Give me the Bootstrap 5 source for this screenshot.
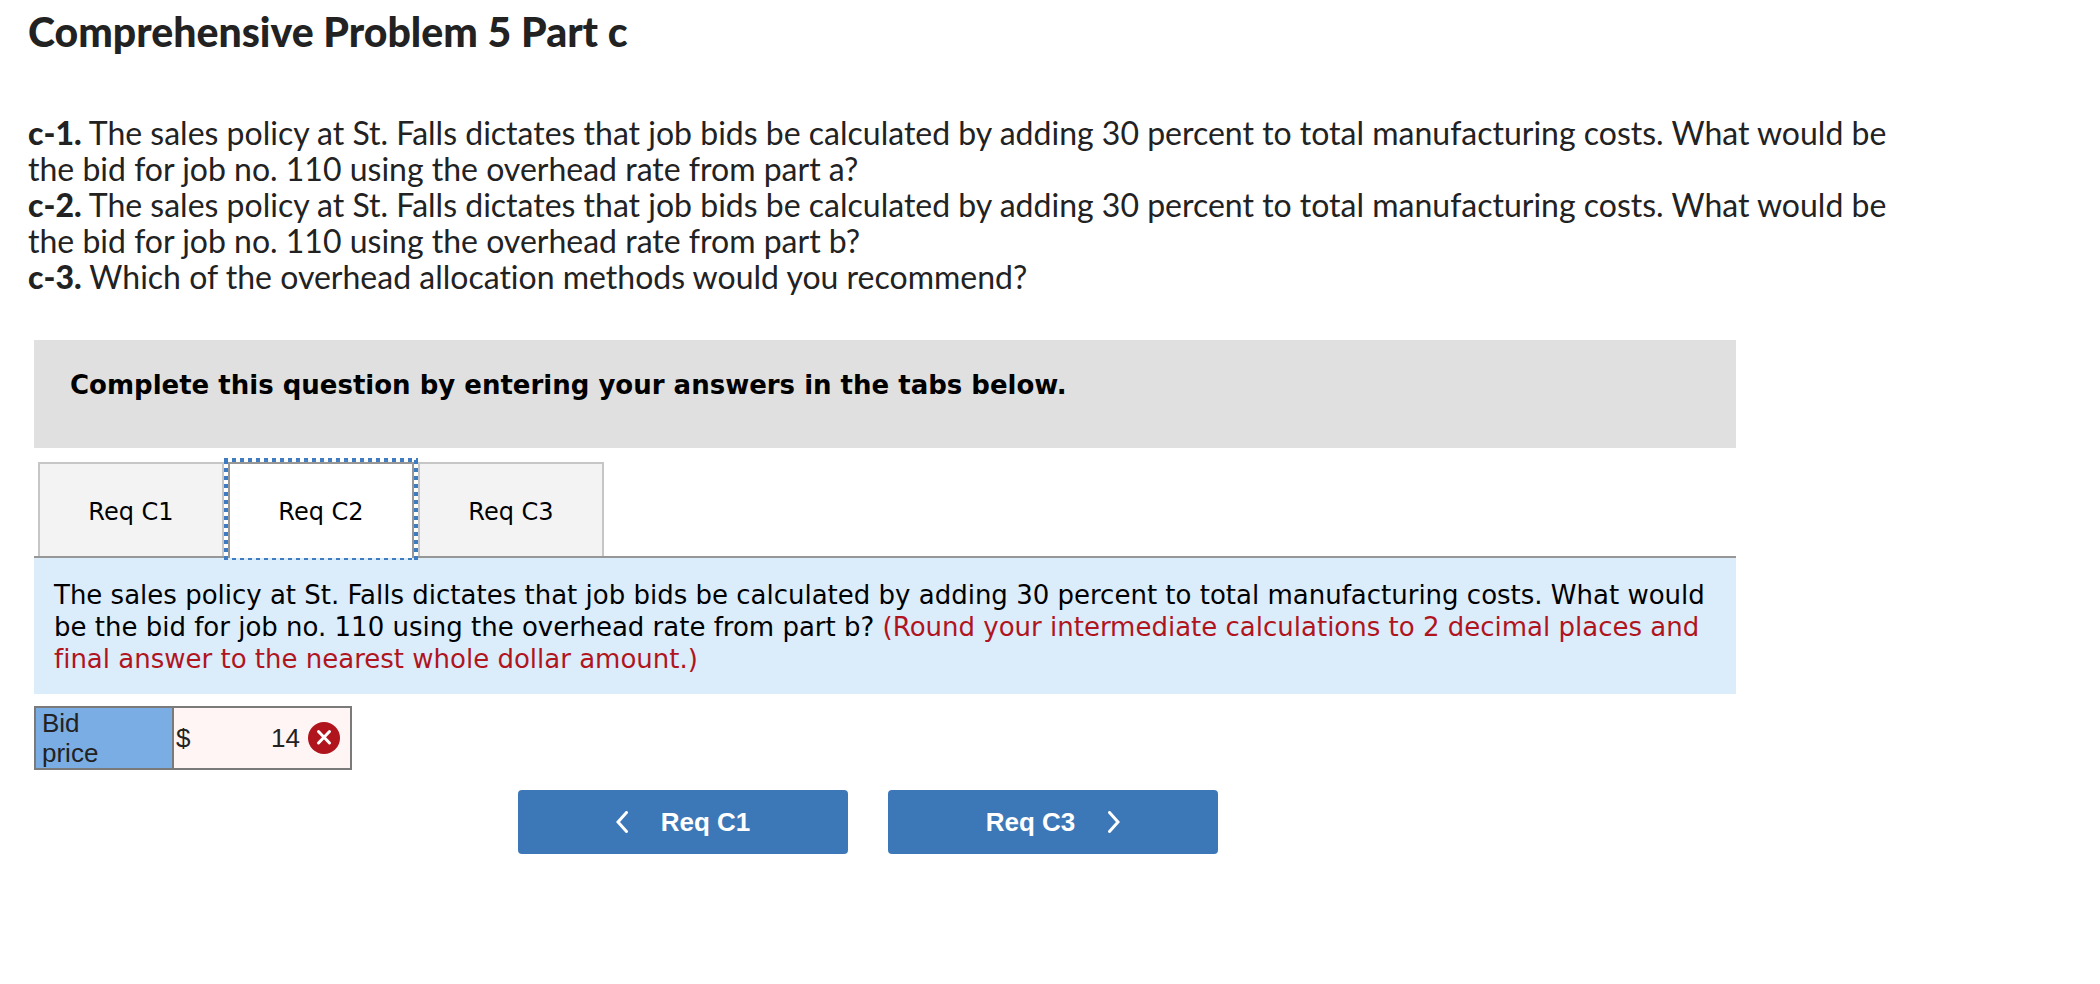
<!DOCTYPE html>
<html lang="en">
<head>
<meta charset="utf-8">
<meta name="viewport" content="width=device-width, initial-scale=1">
<title>Comprehensive Problem 5 Part c</title>
<link rel="stylesheet" href="https://cdn.jsdelivr.net/npm/bootstrap@5.3.0/dist/css/bootstrap.min.css">
<style>
  body { color: #222; background: #fff; font-family: "Liberation Sans", Arial, sans-serif; font-variant-ligatures: none; }
  .problem-intro { max-width: 1948px; padding: 10px 28px 0; font-family: Lato, sans-serif; font-size: 32px; line-height: 36px; }
  .problem-title { font-size: 41px; line-height: 44px; margin-bottom: 61px; font-weight: 900; }
  .problem-intro strong { font-weight: 900; }
  .worksheet { max-width: 1736px; margin-top: 45px; }
  .worksheet-body { padding-left: 34px; }
  .verdana { font-family: Verdana, "DejaVu Sans", sans-serif; font-size: 26px; line-height: 32px; color: #000; }
  .instruction-bar { background: #e0e0e0; padding: 29px 36px 47px; margin-bottom: 14px; }
  .req-tabs { gap: 4px; padding-left: 4px; border-bottom: 2px solid #979797; }
  .req-tab { width: 186px; height: 94px; padding: 4px 0 0; border: 2px solid #c6c6c6; border-bottom: 0; background: #f3f3f3; color: #000; font-size: 24px; }
  .req-tab.active { height: 96px; margin-bottom: -2px; padding-bottom: 2px; border-color: #979797; background: #fff; }
  /* square-dotted focus ring around the selected tab */
  .req-tab.active::after {
    content: ""; position: absolute; inset: -6px -6px -2px; pointer-events: none;
    --h: repeating-linear-gradient(90deg, #3f7bc0 0 4px, #fff0 4px 8px);
    --v: repeating-linear-gradient(0deg, #3f7bc0 0 4px, #fff 4px 8px);
    background: var(--h) top / 100% 4px no-repeat, var(--h) bottom / 100% 2px no-repeat,
      var(--v) left / 4px 100% no-repeat, var(--v) right / 4px 100% no-repeat;
  }
  .prompt-panel { background: #dbecfb; padding: 21px 20px 19px; margin-bottom: 12px; }
  .hint { color: #b0151e; }
  .answer-grid { width: 318px; font-size: 26px; line-height: 30px; border-collapse: collapse; table-layout: fixed; }
  .answer-grid th, .answer-grid td { border: 2px solid #7a7a7a; height: 62px; }
  .answer-grid th { width: 138px; background: #7aade3; padding: 0 48px 0 6px; font-weight: 400; }
  .answer-grid td { background: #fff5f4; padding: 0 10px 0 2px; }
  .answer-input { min-width: 0; border: 0; background: none; color: inherit; padding: 0; line-height: 30px; text-align: right; outline: 0; }
  .step-nav { gap: 40px; margin-top: 20px; }
  .step-btn { width: 330px; height: 64px; border: 0; border-radius: 4px; gap: 33px; background: #3c77b7; color: #fff; font-size: 26px; font-weight: 700; line-height: 32px; }
</style>
</head>
<body>
<main>
  <section class="problem-intro">
    <h1 class="problem-title">Comprehensive Problem 5 Part c</h1>
    <p class="m-0"><strong>c-1.</strong> The sales policy at St. Falls dictates that job bids be calculated by adding 30 percent to total manufacturing costs. What would be the bid for job no. 110 using the overhead rate from part a?</p>
    <p class="m-0"><strong>c-2.</strong> The sales policy at St. Falls dictates that job bids be calculated by adding 30 percent to total manufacturing costs. What would be the bid for job no. 110 using the overhead rate from part b?</p>
    <p class="m-0"><strong>c-3.</strong> Which of the overhead allocation methods would you recommend?</p>
  </section>

  <section class="worksheet">
    <div class="worksheet-body">
      <div class="instruction-bar verdana fw-bold">Complete this question by entering your answers in the tabs below.</div>
      <div class="req-tabs verdana d-flex" role="tablist">
        <button class="req-tab" type="button" role="tab" aria-selected="false">Req C1</button>
        <button class="req-tab active position-relative" type="button" role="tab" aria-selected="true" aria-controls="req-c2">Req C2</button>
        <button class="req-tab" type="button" role="tab" aria-selected="false">Req C3</button>
      </div>
      <div id="req-c2" role="tabpanel">
        <p class="prompt-panel verdana">The sales policy at St. Falls dictates that job bids be calculated by adding 30 percent to total manufacturing costs. What would be the bid for job no. 110 using the overhead rate from part b? <span class="hint">(Round your intermediate calculations to 2 decimal places and final answer to the nearest whole dollar amount.)</span></p>
        <table class="answer-grid">
          <tbody>
            <tr>
              <th scope="row"><label for="bid-price">Bid price</label></th>
              <td>
                <div class="d-flex align-items-center">
                  <span>$</span>
                  <input class="answer-input flex-grow-1 w-100" id="bid-price" type="text" value="14">
                  <svg class="flex-shrink-0 ms-2" width="32" height="32" viewBox="0 0 32 32" role="img" aria-label="Incorrect"><circle cx="16" cy="16" r="16" fill="#b0151e"/><path d="M10.500 9.500l11 11.500M21.500 9.500l-11 11.500" stroke="#fff" stroke-width="3" stroke-linecap="round"/></svg>
                </div>
              </td>
            </tr>
          </tbody>
        </table>
      </div>
    </div>
    <nav class="step-nav d-flex flex-wrap justify-content-center" aria-label="Requirements">
      <button class="step-btn d-flex align-items-center justify-content-center" type="button">
        <svg width="12" height="22" viewBox="0 0 12 22" fill="none" stroke="#fff" stroke-width="3" stroke-linecap="round" aria-hidden="true"><path d="M10.500 1.500L2 11l8.500 9.500"/></svg>
        Req C1
      </button>
      <button class="step-btn d-flex align-items-center justify-content-center" type="button">
        Req C3
        <svg width="12" height="22" viewBox="0 0 12 22" fill="none" stroke="#fff" stroke-width="3" stroke-linecap="round" aria-hidden="true"><path d="M1.500 1.500L10 11l-8.500 9.500"/></svg>
      </button>
    </nav>
  </section>
</main>
<script src="https://cdn.jsdelivr.net/npm/bootstrap@5.3.0/dist/js/bootstrap.bundle.min.js"></script>
</body>
</html>
